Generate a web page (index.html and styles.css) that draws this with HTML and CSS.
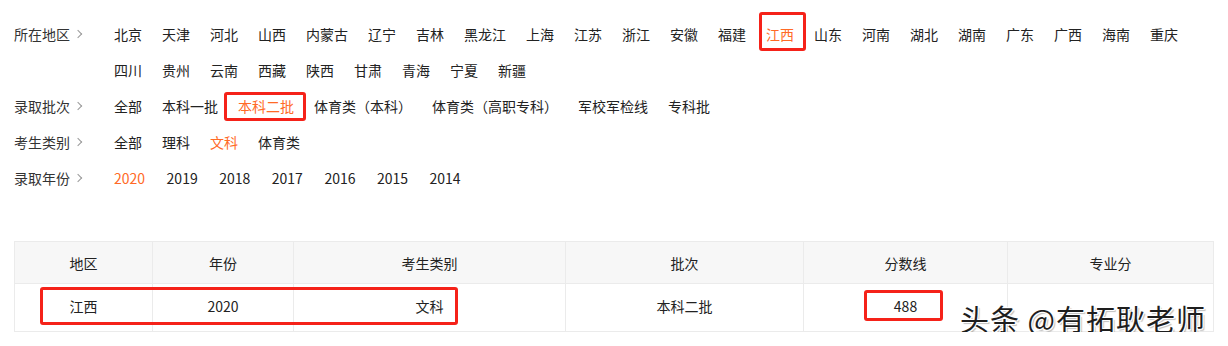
FILE: index.html
```html
<!DOCTYPE html>
<html lang="zh-CN">

<head>
    <meta charset="UTF-8">
    <title>分数线查询</title>
    <link rel="stylesheet" href="styles.css">
</head>

<body>
    <div class="filter">
        <div class="rad">
            <div class="label">所在地区<span class="pil"></span></div>
            <div class="valg omraade">
                <span>北京</span><span>天津</span><span>河北</span><span>山西</span><span>内蒙古</span><span>辽宁</span>
                <span>吉林</span><span>黑龙江</span><span>上海</span><span>江苏</span><span>浙江</span><span>安徽</span>
                <span>福建</span><span class="valgt markeret m-omraade">江西</span><span>山东</span><span>河南</span>
                <span>湖北</span><span>湖南</span><span>广东</span><span>广西</span><span>海南</span><span>重庆</span>
                <span>四川</span><span>贵州</span><span>云南</span><span>西藏</span><span>陕西</span><span>甘肃</span>
                <span>青海</span><span>宁夏</span><span>新疆</span>
            </div>
        </div>
        <div class="rad">
            <div class="label">录取批次<span class="pil"></span></div>
            <div class="valg">
                <span>全部</span><span>本科一批</span><span class="valgt markeret m-batch">本科二批</span>
                <span>体育类（本科）</span><span>体育类（高职专科）</span><span>军校军检线</span><span>专科批</span>
            </div>
        </div>
        <div class="rad">
            <div class="label">考生类别<span class="pil"></span></div>
            <div class="valg">
                <span>全部</span><span>理科</span><span class="valgt">文科</span><span>体育类</span>
            </div>
        </div>
        <div class="rad">
            <div class="label">录取年份<span class="pil"></span></div>
            <div class="valg aar">
                <span class="valgt">2020</span><span>2019</span><span>2018</span><span>2017</span>
                <span>2016</span><span>2015</span><span>2014</span>
            </div>
        </div>
    </div>

    <div class="resultat">
        <table>
            <thead>
                <tr>
                    <th class="k1">地区</th>
                    <th class="k2">年份</th>
                    <th class="k3">考生类别</th>
                    <th class="k4">批次</th>
                    <th class="k5">分数线</th>
                    <th class="k6">专业分</th>
                </tr>
            </thead>
            <tbody>
                <tr>
                    <td>江西</td>
                    <td>2020</td>
                    <td>文科</td>
                    <td>本科二批</td>
                    <td>488</td>
                    <td></td>
                </tr>
            </tbody>
        </table>
        <!-- røde markeringer oven på tabellen -->
        <div class="ramme ramme-raekke"></div>
        <div class="ramme ramme-score"></div>
        <div class="vandmaerke">头条 @有拓耿老师</div>
    </div>
</body>

</html>
```

FILE: styles.css
```css
* {
    margin: 0;
    padding: 0;
    box-sizing: border-box;
}

body {
    font-family: "Noto Sans CJK SC", sans-serif;
    font-size: 14px;
    color: #222;
    background: #fff;
    padding: 16px 14px 0;
}

.rad {
    display: flex;
    align-items: flex-start;
    line-height: 36px;
}

.label {
    width: 100px;
    height: 36px;
    flex-shrink: 0;
    color: #333;
    display: flex;
    align-items: center;
}

/* lille grå pil efter label */
.pil {
    display: inline-block;
    width: 6px;
    height: 6px;
    margin-left: 5px;
    border-top: 1px solid #999;
    border-right: 1px solid #999;
    transform: rotate(45deg);
}

.valg {
    display: flex;
    flex-wrap: wrap;
    max-width: 1080px;
    column-gap: 20px;
}

.valg span {
    white-space: nowrap;
}

.aar {
    column-gap: 21.5px;
}

.valgt {
    color: #ff6a26;
}

.markeret {
    position: relative;
}

.markeret::after {
    content: "";
    position: absolute;
    border: 3px solid #f52219;
    border-radius: 3px;
}

.m-omraade::after {
    left: -7px;
    right: -12px;
    top: -4px;
    bottom: 1px;
}

.m-batch::after {
    left: -14px;
    right: -12px;
    top: 4px;
    bottom: 3px;
}

.resultat {
    position: relative;
    margin-top: 45px;
    width: 1199px;
}

table {
    width: 100%;
    border-collapse: collapse;
    table-layout: fixed;
}

th,
td {
    border: 1px solid #ebebeb;
    text-align: center;
    font-weight: normal;
}

th {
    background: #f7f7f7;
    height: 42px;
    color: #222;
}

td {
    height: 48px;
    padding-bottom: 3px;
}

.k1 { width: 138px; }
.k2 { width: 141px; }
.k3 { width: 272px; }
.k4 { width: 238px; }
.k5 { width: 204px; }
.k6 { width: 206px; }

.ramme {
    position: absolute;
    border: 3px solid #f52219;
    border-radius: 3px;
}

.ramme-raekke {
    left: 26px;
    top: 46px;
    width: 418px;
    height: 38px;
}

.ramme-score {
    left: 850px;
    top: 49px;
    width: 79px;
    height: 31px;
}

.vandmaerke {
    position: absolute;
    left: 946px;
    top: 60px;
    font-size: 29px;
    line-height: 34px;
    letter-spacing: 1px;
    color: #1e1e1e;
    white-space: nowrap;
    text-shadow: 1px 1px 0 #fff, -1px -1px 0 #fff, 1px -1px 0 #fff, -1px 1px 0 #fff, 2px 2px 1px rgba(0, 0, 0, 0.25);
}
```
